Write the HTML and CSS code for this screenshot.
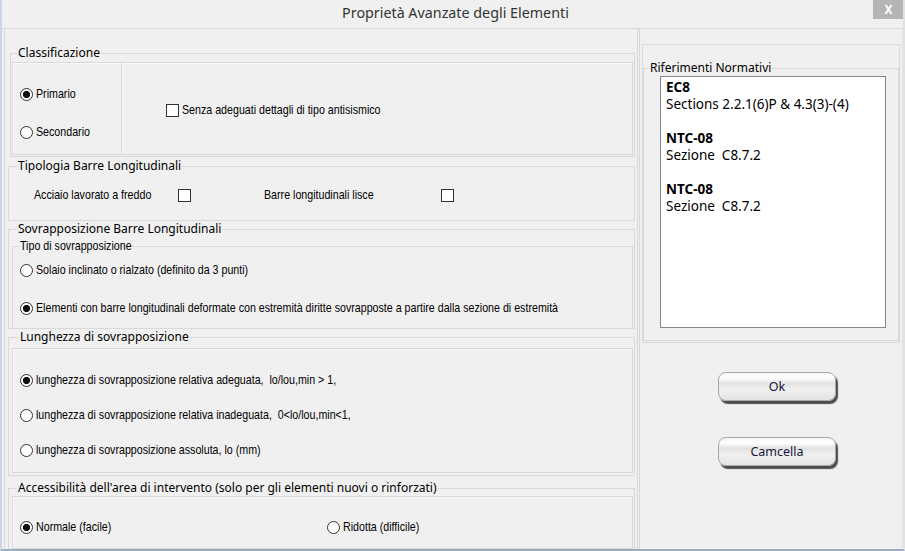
FILE: index.html
```html
<!DOCTYPE html>
<html lang="it">
<head>
    <meta charset="UTF-8">
    <title>Proprietà Avanzate degli Elementi</title>
    <link rel="stylesheet" href="styles.css">
</head>
<body>
    <div class="window">
        <div class="titlebar">
            <span></span>
            <span class="title">Proprietà Avanzate degli Elementi</span>
            <span class="close">X</span>
        </div>

        <div class="main">
            <div class="left-panel">
                <fieldset class="group g-class">
                    <legend>Classificazione</legend>
                    <div class="inset split">
                        <div class="radio-col">
                            <div class="opt"><span class="radio on"></span><span class="txt">Primario</span></div>
                            <div class="opt"><span class="radio"></span><span class="txt">Secondario</span></div>
                        </div>
                        <div class="check-col">
                            <div class="opt"><span class="check"></span><span class="txt">Senza adeguati dettagli di tipo antisismico</span></div>
                        </div>
                    </div>
                </fieldset>

                <fieldset class="group g-typ">
                    <legend>Tipologia Barre Longitudinali</legend>
                    <div class="typ-row opt">
                        <span class="txt">Acciaio lavorato a freddo</span>
                        <span class="check"></span>
                        <span></span>
                        <span class="txt">Barre longitudinali lisce</span>
                        <span class="check"></span>
                    </div>
                </fieldset>

                <fieldset class="group g-sov">
                    <legend>Sovrapposizione Barre Longitudinali</legend>
                    <fieldset class="sub">
                        <legend><span class="txt">Tipo di sovrapposizione</span></legend>
                        <div class="sub-list">
                            <div class="opt"><span class="radio"></span><span class="txt">Solaio inclinato o rialzato (definito da 3 punti)</span></div>
                            <div class="opt"><span class="radio on"></span><span class="txt">Elementi con barre longitudinali deformate con estremità diritte sovrapposte a partire dalla sezione di estremità</span></div>
                        </div>
                    </fieldset>
                </fieldset>

                <fieldset class="group g-len">
                    <legend>Lunghezza di sovrapposizione</legend>
                    <div class="inset len-list">
                        <div class="opt"><span class="radio on"></span><span class="txt">lunghezza di sovrapposizione relativa adeguata,&nbsp; lo/lou,min &gt; 1,</span></div>
                        <div class="opt"><span class="radio"></span><span class="txt">lunghezza di sovrapposizione relativa inadeguata,&nbsp; 0&lt;lo/lou,min&lt;1,</span></div>
                        <div class="opt"><span class="radio"></span><span class="txt">lunghezza di sovrapposizione assoluta, lo (mm)</span></div>
                    </div>
                </fieldset>

                <fieldset class="group g-acc">
                    <legend>Accessibilità dell'area di intervento (solo per gli elementi nuovi o rinforzati)</legend>
                    <div class="inset acc-row">
                        <div class="opt"><span class="radio on"></span><span class="txt">Normale (facile)</span></div>
                        <div class="opt"><span class="radio"></span><span class="txt">Ridotta (difficile)</span></div>
                    </div>
                </fieldset>
            </div>

            <div class="right-panel">
                <div class="ref-box">
                    <fieldset class="group g-ref">
                        <legend>Riferimenti Normativi</legend>
                        <div class="listbox">
                            <b>EC8</b>
                            <p>Sections 2.2.1(6)P &amp; 4.3(3)-(4)</p>
                            <p>&nbsp;</p>
                            <b>NTC-08</b>
                            <p>Sezione&nbsp; C8.7.2</p>
                            <p>&nbsp;</p>
                            <b>NTC-08</b>
                            <p>Sezione&nbsp; C8.7.2</p>
                        </div>
                    </fieldset>
                </div>
                <button class="btn btn-ok">Ok</button>
                <button class="btn btn-cancel">Camcella</button>
            </div>
        </div>
    </div>
</body>
</html>
```

FILE: styles.css
```css
* {
    box-sizing: border-box;
    margin: 0;
    padding: 0;
}

body {
    font-family: "Noto Sans", "Open Sans", sans-serif;
    background-color: #f0f0f0;
    color: #000;
}

.window {
    width: 905px;
    height: 551px;
    display: flex;
    flex-direction: column;
    background-color: #f0f0f0;
    border-left: 2px solid #c8d6e6;
    border-right: 2px solid #e2e2e2;
    border-bottom: 2px solid #9cadc2;
    overflow: hidden;
}

/* title bar */
.titlebar {
    height: 29px;
    flex-shrink: 0;
    display: grid;
    grid-template-columns: 1fr auto 1fr;
    align-items: start;
    border-bottom: 1px solid #d8d8d8;
}

.title {
    margin-left: 6px;
    font-size: 14.3px;
    line-height: 26px;
    color: #333;
}

.close {
    justify-self: end;
    width: 31px;
    height: 19px;
    margin-right: -1px;
    background-color: #b5b5b5;
    color: #fff;
    font-size: 12px;
    font-weight: bold;
    line-height: 19px;
    text-align: center;
}

.main {
    flex: 1;
    display: flex;
    min-height: 0;
}

/* left side */
.left-panel {
    width: 634px;
    margin-left: 2px;
    padding: 16px 2px 0 5px;
    border-left: 1px solid #d8d8d8;
    border-right: 1px solid #d8d8d8;
}

fieldset {
    border: 1px solid #d9d9d9;
    min-width: 0;
}

legend {
    margin-left: 8px;
    padding: 0 1px;
    font-size: 12px;
    line-height: 16px;
}

.inset {
    border: 1px solid #d9d9d9;
    box-shadow: inset 1px 1px 0 #f8f8f8;
}

.opt {
    display: flex;
    align-items: center;
    height: 16px;
    white-space: nowrap;
}

/* narrow control text */
.txt {
    display: inline-block;
    font-family: "Liberation Sans", Arial, sans-serif;
    font-size: 13px;
    line-height: 16px;
    white-space: nowrap;
    transform: scaleX(0.82);
    transform-origin: 0 50%;
}

.radio {
    width: 13px;
    height: 13px;
    margin-right: 3px;
    flex-shrink: 0;
    border: 1px solid #333;
    border-radius: 50%;
    background-color: #fff;
}

.radio.on {
    background: radial-gradient(circle, #111 0 3.3px, #fff 3.9px);
}

.check {
    width: 13px;
    height: 13px;
    margin-right: 3px;
    flex-shrink: 0;
    border: 1px solid #333;
    background-color: #fff;
}

.g-class legend {
    margin-left: 6px;
}

.split {
    display: flex;
    height: 93px;
    margin: 1px;
}

.radio-col {
    width: 109px;
    padding: 23px 0 0 7px;
    border-right: 1px solid #d9d9d9;
    box-shadow: 1px 0 0 #fafafa;
    display: flex;
    flex-direction: column;
    gap: 22px;
}

.check-col {
    padding: 39px 0 0 44px;
}

.g-typ,
.g-sov,
.g-len,
.g-acc {
    margin-left: -2px;
}

.g-typ {
    margin-top: 1px;
}

.typ-row {
    display: grid;
    grid-template-columns: 144px 13px 73px 177px 13px;
    margin: 13px 0 17px 25px;
}

.sub {
    margin: 1px 1px 0 3px;
    border-bottom: none;
}

.sub legend {
    width: 93px;
    margin-left: 6px;
    line-height: 15px;
}

.sub-list {
    padding: 8px 0 12px 7px;
    display: flex;
    flex-direction: column;
    gap: 22px;
}

.g-len legend {
    margin-left: 10px;
}

.len-list {
    margin: 3px 1px 2px 3px;
    padding: 23px 0 14px 7px;
    display: flex;
    flex-direction: column;
    gap: 19px;
}

.g-acc {
    margin-top: 4px;
}

.acc-row {
    display: grid;
    grid-template-columns: 307px auto;
    margin: 0 1px 0 3px;
    padding: 22px 0 13px 7px;
}

/* right side */
.right-panel {
    flex: 1;
    margin-left: 1px;
    padding: 15px 2px 0 2px;
    border-left: 1px solid #d8d8d8;
    border-right: 1px solid #e4e4e4;
    display: flex;
    flex-direction: column;
}

.ref-box {
    height: 299px;
    border: 1px solid #d9d9d9;
    padding-top: 15px;
}

.g-ref {
    height: 281px;
}

.g-ref legend {
    margin-left: 5px;
}

.listbox {
    width: 226px;
    height: 252px;
    margin-left: 16px;
    background-color: #fff;
    border: 1px solid #828790;
    padding: 2px 5px;
    font-size: 13.5px;
    line-height: 17px;
}

.listbox b {
    display: block;
}

.btn {
    width: 118px;
    height: 29px;
    margin-left: 76px;
    border: 1px solid #a8a8a8;
    border-radius: 8px;
    background: linear-gradient(to bottom, #f4f4f4 0%, #ffffff 18%, #e2e2e2 38%, #f0f0f0 62%, #e4e4e4 100%);
    box-shadow: 2px 3px 1px #4d4d4d;
    font-family: "Noto Sans", sans-serif;
    font-size: 12.5px;
    color: #16163a;
}

.btn-ok {
    margin-top: 29px;
}

.btn-cancel {
    margin-top: 36px;
}
```
